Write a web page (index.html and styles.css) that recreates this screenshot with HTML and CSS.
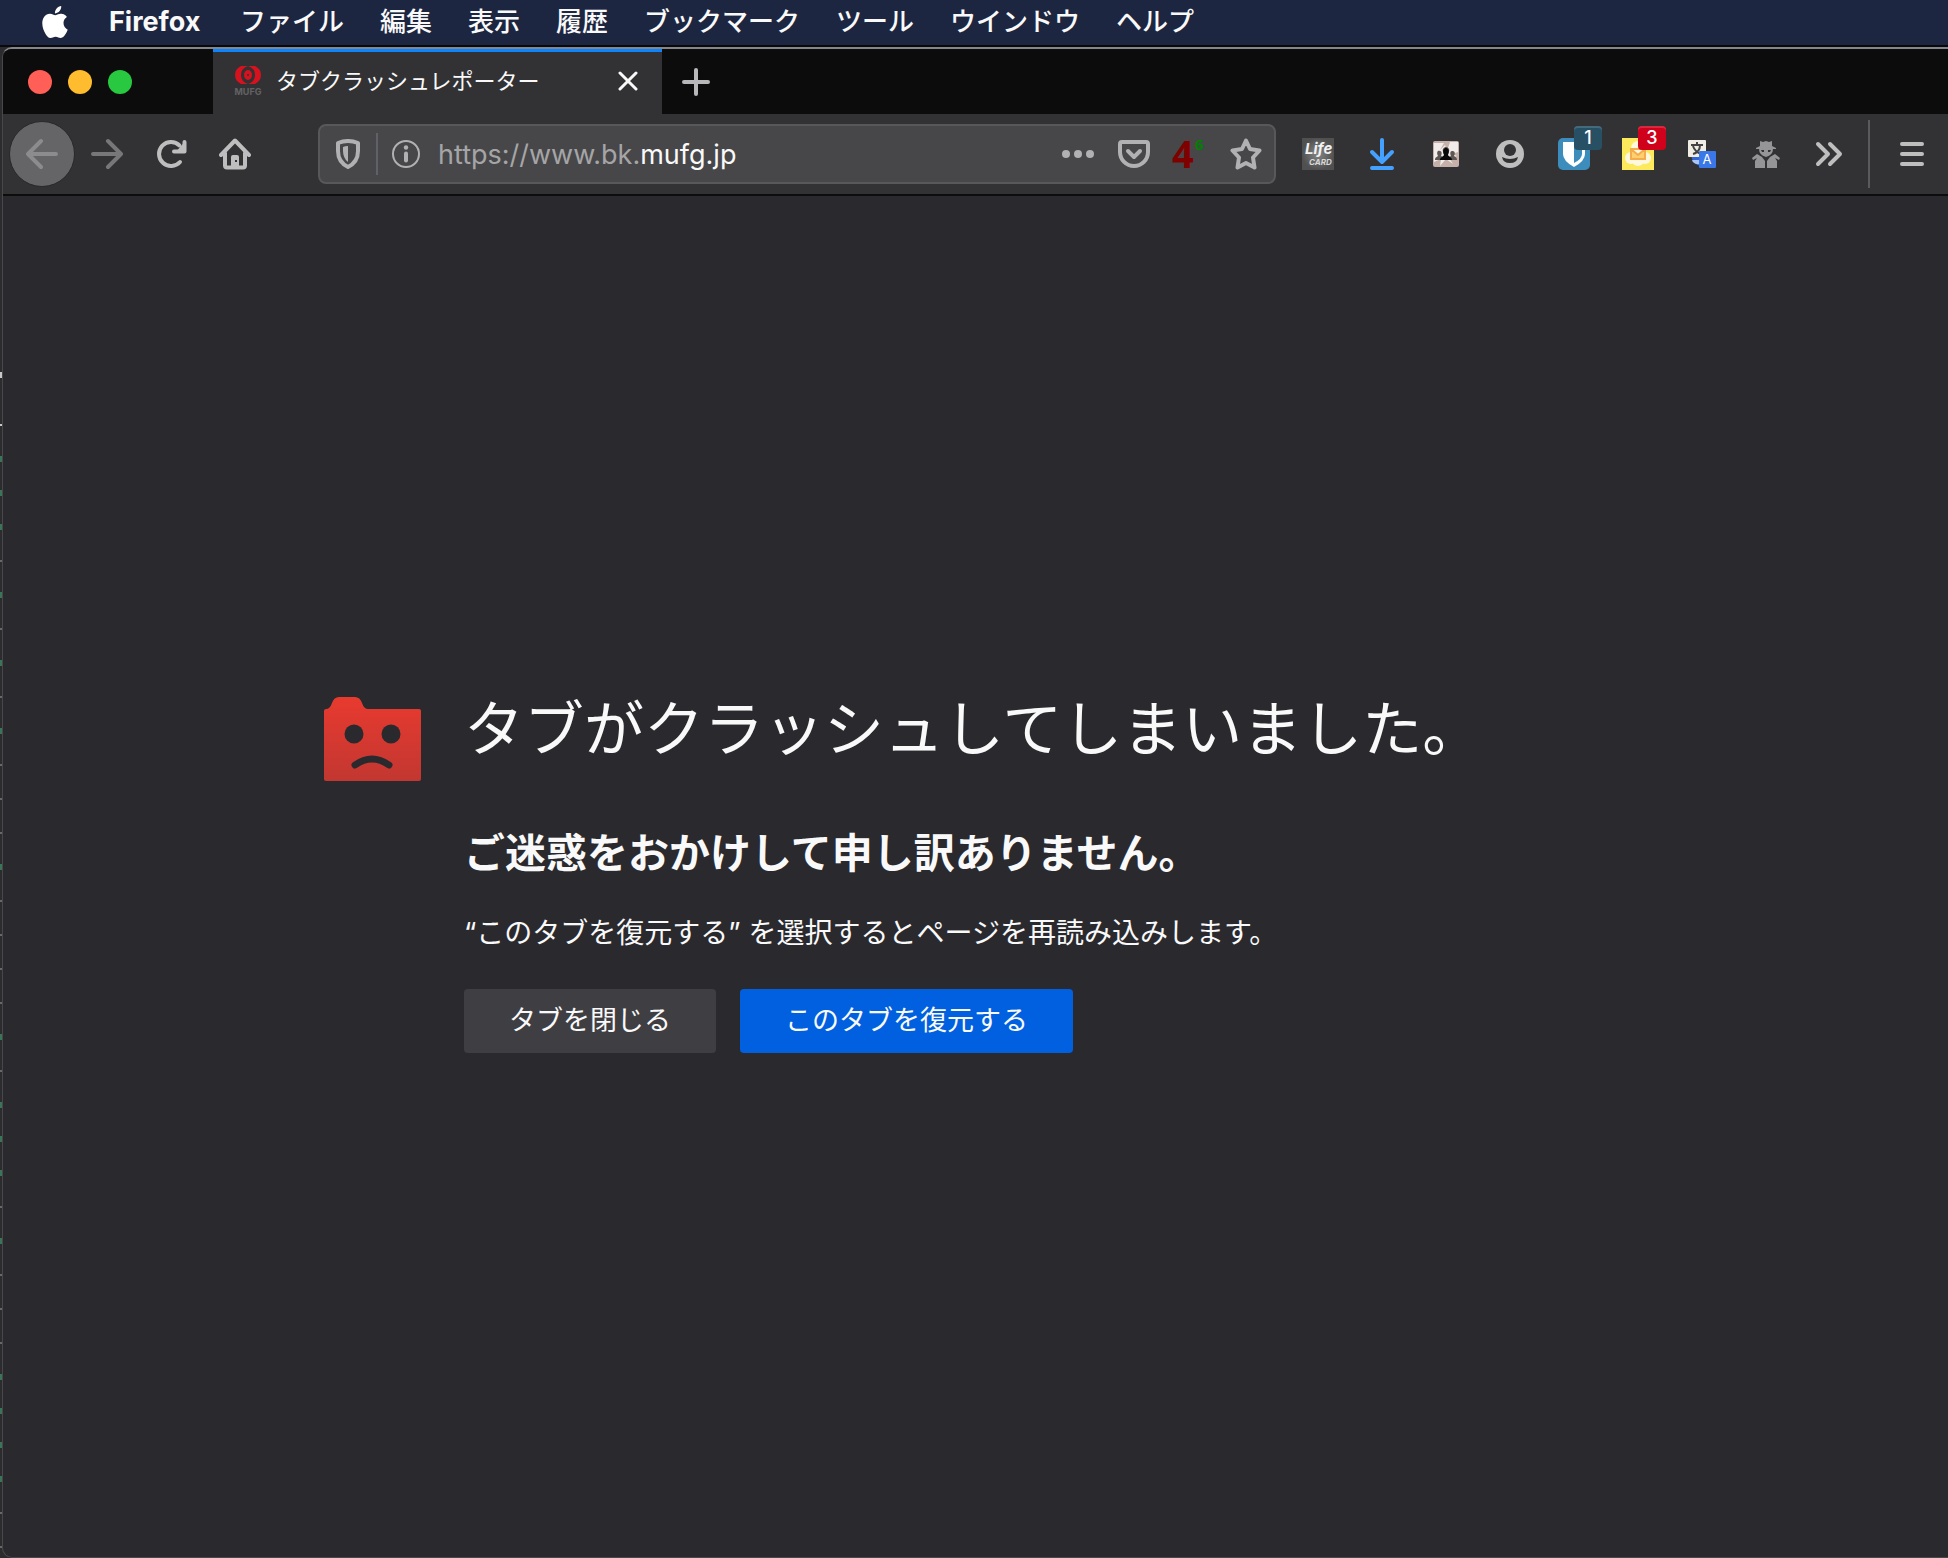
FILE: index.html
```html
<!DOCTYPE html>
<html lang="ja">
<head>
<meta charset="utf-8">
<title>タブクラッシュレポーター</title>
<meta name="viewport" content="width=device-width, initial-scale=1">
<link rel="stylesheet" href="styles.css">
</head>
<body>
<nav class="menubar" aria-label="メニューバー">
  <button class="menu-item apple" aria-label="アップル">
    <svg width="26" height="32" viewBox="2 0 20 24" preserveAspectRatio="none"><path fill="#fff" d="M12.15 6.9c-.95 0-2.42-1.08-3.96-1.04-2.04.03-3.91 1.18-4.96 3.01-2.12 3.68-.55 9.1 1.52 12.09 1.01 1.45 2.21 3.09 3.79 3.04 1.52-.07 2.09-.99 3.94-.99 1.83 0 2.35.99 3.96.95 1.64-.03 2.68-1.48 3.68-2.95 1.16-1.69 1.64-3.33 1.66-3.42-.04-.01-3.18-1.22-3.22-4.86-.03-3.04 2.48-4.49 2.6-4.56-1.43-2.09-3.62-2.32-4.39-2.38-2-.16-3.68 1.09-4.62 1.09zM15.53 3.83c.84-1.01 1.4-2.43 1.25-3.83-1.21.05-2.66.81-3.53 1.82-.78.9-1.45 2.34-1.27 3.71 1.34.1 2.71-.69 3.55-1.7"/></svg>
  </button>
  <button class="menu-item app-name">Firefox</button>
  <button class="menu-item">ファイル</button>
  <button class="menu-item">編集</button>
  <button class="menu-item">表示</button>
  <button class="menu-item">履歴</button>
  <button class="menu-item">ブックマーク</button>
  <button class="menu-item">ツール</button>
  <button class="menu-item">ウインドウ</button>
  <button class="menu-item">ヘルプ</button>
</nav>
<div class="desktop">
  <svg class="behind" width="2" height="1508" aria-hidden="true">
    <g transform="translate(0 3)">
      <path stroke="#68686b" stroke-width="2" stroke-dasharray="2 32" d="M1 408V1508"/>
      <path fill="#3b7558" d="M0 406h2v6H0zM0 440h2v6H0zM0 474h2v6H0zM0 542h2v6H0zM0 610h2v6H0zM0 678h2v6H0zM0 814h2v6H0zM0 984h2v6H0zM0 1052h2v6H0zM0 1086h2v6H0zM0 1120h2v6H0zM0 1188h2v6H0zM0 1324h2v6H0zM0 1358h2v6H0zM0 1392h2v6H0zM0 1426h2v6H0z"/>
      <path fill="#c8c8c8" d="M0 322h2v6H0zM0 374h2v2H0z"/>
    </g>
  </svg>
  <div class="window">
    <header class="tabbar">
      <div class="lights">
        <button class="light close" aria-label="閉じる"></button>
        <button class="light minimize" aria-label="しまう"></button>
        <button class="light zoom" aria-label="拡大"></button>
      </div>
      <div class="tab">
        <svg class="favicon" width="28" height="30" viewBox="0 0 28 30" aria-hidden="true">
          <path fill="#d5121e" d="M7 0h7Q7 2.500 7 9t7 9H7Q1 15 1 9T7 0zM21 0h-7q7 2.500 7 9t-7 9h7q6-3 6-9t-6-9z"/>
          <path fill="#d5121e" fill-rule="evenodd" d="M14 4a4 5 0 0 1 0 10 4 5 0 0 1 0-10zM14 8a1 1 0 0 0 0 2 1 1 0 0 0 0-2z"/>
          <text x="14" y="29" text-anchor="middle" font-size="9" font-weight="700" fill="#626264">MUFG</text>
        </svg>
        <span class="tab-title">タブクラッシュレポーター</span>
        <button class="tab-close" aria-label="タブを閉じる">
          <svg width="20" height="20" viewBox="0 0 20 20"><path d="M2 2l16 16M18 2L2 18" stroke="#f9f9fa" stroke-width="3" stroke-linecap="round"/></svg>
        </button>
      </div>
      <button class="new-tab" aria-label="新しいタブ">
        <svg width="28" height="28" viewBox="0 0 28 28"><path d="M14 2v24M2 14h24" stroke="#b8b8ba" stroke-width="4" stroke-linecap="round"/></svg>
      </button>
    </header>
    <div class="toolbar">
      <div class="nav-buttons">
        <button class="back" aria-label="戻る"><svg width="32" height="32" viewBox="0 0 32 32"><path d="M30 16H2M15 3L2 16l13 13" class="line dim-a"/></svg></button>
        <button class="nav" aria-label="進む"><svg width="32" height="32" viewBox="0 0 32 32"><path d="M2 16h28M17 3l13 13-13 13" class="line dim-b"/></svg></button>
        <button class="nav" aria-label="再読み込み"><svg width="32" height="32" viewBox="0 0 32 32"><path d="M25 24A12 12 0 1 1 24.500 7.500" class="line"/><path d="M19 13.500h10.500V4" class="line"/><path d="M20 15h9.500V4z" fill="#bebebf"/></svg></button>
        <button class="nav" aria-label="ホーム"><svg width="32" height="32" viewBox="0 0 32 32"><path d="M2 17L16 2.500 30 17M6 15v12.500a2 2 0 0 0 2 2h16a2 2 0 0 0 2-2V15" class="line"/><path d="M12 29V19a2 2 0 0 1 2-2h4a2 2 0 0 1 2 2v10z" fill="#bebebf"/><path d="M16 22h2v2h-2z" fill="#323234"/></svg></button>
      </div>
      <div class="urlbar">
        <button class="url-icon shield" aria-label="トラッキング防止"><svg width="26" height="30" viewBox="0 0 26 30"><path d="M3 4q10-4 20 0v8q0 11-10 16Q3 23 3 12z" fill="none" stroke="#b1b1b3" stroke-width="4" stroke-linejoin="round"/><path d="M13 7v16Q8 19 8 12V8q2-1 5-1z" fill="#b1b1b3"/></svg></button>
        <button class="url-icon info" aria-label="サイト情報"><svg width="30" height="30" viewBox="0 0 30 30"><circle cx="15" cy="15" r="13" fill="none" stroke="#b1b1b3" stroke-width="2"/><path d="M15 14.500v7" stroke="#b1b1b3" stroke-width="4" stroke-linecap="round"/><circle cx="15" cy="8.500" r="2.200" fill="#b1b1b3"/></svg></button>
        <a class="url" href="https://www.bk.mufg.jp">https://www.bk.<span class="domain">mufg.jp</span></a>
        <div class="url-actions">
          <button class="url-icon" aria-label="ページ操作"><svg width="32" height="32" viewBox="0 0 32 32" fill="#b1b1b3"><circle cx="4" cy="16" r="4"/><circle cx="16" cy="16" r="4"/><circle cx="28" cy="16" r="4"/></svg></button>
          <button class="url-icon" aria-label="Pocket"><svg width="32" height="32" viewBox="0 0 32 32"><path d="M4 4h24q2 0 2 2v8a14 14 0 0 1-28 0V6q0-2 2-2z" class="line url-line"/><path d="M10 13l6 6 6-6" class="line url-line"/></svg></button>
          <button class="url-icon" aria-label="IPv4"><svg class="ip" width="32" height="32" viewBox="0 0 32 32"><text x="-2" y="30" font-size="38" fill="#800000">4</text><text x="21" y="12" font-size="15" fill="#008000">6</text></svg></button>
          <button class="url-icon" aria-label="ブックマークに追加"><svg width="32" height="32" viewBox="0 0 32 32"><path d="M16 2.500l4 8.500 9.500 1.500-6.500 7 1.500 10L16 25l-8.500 4.500L9 19.500l-6.500-7L12 11z" class="line url-line"/></svg></button>
        </div>
      </div>
      <div class="extensions">
        <button class="ext" aria-label="Life Card"><svg width="32" height="32" viewBox="0 0 32 32"><defs><radialGradient id="lc"><stop offset="0" stop-color="#858585"/><stop offset="1" stop-color="#505050"/></radialGradient></defs><path fill="url(#lc)" d="M0 0h32v32H0z"/><text x="3" y="16" font-size="15" font-style="italic" font-weight="700" fill="#f2f2f2">Life</text><text x="7" y="27" font-size="8" font-style="italic" font-weight="700" fill="#d8d8d8">CARD</text></svg></button>
        <button class="ext" aria-label="ダウンロード"><svg width="32" height="32" viewBox="0 0 32 32"><path d="M16 2v22M6 14l10 10 10-10M6 30h20" fill="none" stroke="#45a1ff" stroke-width="4" stroke-linecap="round" stroke-linejoin="round"/></svg></button>
        <button class="ext" aria-label="グループ"><svg width="32" height="32" viewBox="0 0 32 32"><rect x="3" y="3" width="26" height="26" rx="2" fill="#c5b1a9"/><path d="M4 5h10l-4 7 5-5 2 6 3-9h8v10l-6 2 5 2-8 2 4 6-7-5-6 7 1-7-7 3z" fill="#f1ece9"/><path d="M5 22c0-3 2-3 3-4-2-4 0-6 2-5 2 0 2 3 1 5l2 1c1-1 1-1 1-3-3-5 0-7 2-7s5 2 2 7c0 2 0 2 1 3l2-1c-1-2-1-5 1-5s4 1 2 5c1 1 3 1 3 4z" fill="#5d5653"/><path d="M10 22c0-3 3-3 4-5-2-5 0-7 2-7s4 2 2 7c1 2 4 2 4 5z" fill="#090909"/></svg></button>
        <button class="ext" aria-label="アカウント"><svg width="32" height="32" viewBox="0 0 32 32"><circle cx="16" cy="16" r="14" fill="#bebebf"/><circle cx="16" cy="12" r="6" fill="#323234"/><path d="M8 19q8 4 16 0-1 6-8 6t-8-6z" fill="#323234"/></svg></button>
        <button class="ext" aria-label="Bitwarden"><svg width="32" height="32" viewBox="0 0 32 32"><rect width="32" height="32" rx="5" fill="#3c8dbc"/><path d="M5 4h22v12q0 7-11 13Q5 23 5 16z" fill="#fff"/><path d="M16 7h8v9q0 5-8 9z" fill="#3c8dbc"/></svg><span class="badge teal">1</span></button>
        <button class="ext" aria-label="メール通知"><svg width="32" height="32" viewBox="0 0 32 32"><path fill="#fde95c" d="M0 0h32v32H0z"/><g fill="#fff8df"><circle cx="16" cy="10" r="7"/><circle cx="9" cy="20" r="6"/><circle cx="23" cy="20" r="6"/><circle cx="16" cy="22" r="6"/></g><path d="M9 11h14v10H9zM9 11l7 6 7-6" fill="#fdd070" stroke="#f5ac4c" stroke-width="2"/></svg><span class="badge red">3</span></button>
        <button class="ext" aria-label="翻訳"><svg width="32" height="32" viewBox="0 0 32 32"><path d="M5 17h10v11q-9-2-10-11z" fill="#3367d6"/><path d="M6 22h9v4q-8 1-9-4z" fill="#a9c4f7"/><rect x="2" y="2" width="18" height="17" rx="1" fill="#f0eee4"/><path d="M11 4v3M5 7h12M7 16q7-2 7-9M7 8q2 6 8 8" stroke="#444" stroke-width="2" fill="none"/><rect x="13" y="13" width="17" height="17" rx="1" fill="#3a77e8"/><text x="21" y="26" text-anchor="middle" font-size="13" fill="#fff">A</text></svg></button>
        <button class="ext" aria-label="プライバシー"><svg width="32" height="32" viewBox="0 0 32 32" fill="#959597"><path d="M10 3l3 1 3-1 3 1 3-1v5l4 2v1H6v-1l4-2zM9 11h14q0 6-7 8-7-2-7-8zM7 16l5 3 3 4v7H5v-7l2-3-4 2-1-2zM25 16l-5 3-3 4v7h10v-7l-2-3 4 2 1-2z"/><path d="M11 12h3v2h-2zM18 12h3l-1 2h-2z" fill="#323234"/></svg></button>
        <button class="ext" aria-label="その他のツール"><svg width="32" height="32" viewBox="0 0 32 32"><path d="M4 6l10 10L4 26M16 6l10 10-10 10" class="line"/></svg></button>
      </div>
      <button class="app-menu" aria-label="メニュー"><svg width="24" height="24" viewBox="0 0 24 24"><path d="M2 2h20M2 12h20M2 22h20" class="line"/></svg></button>
    </div>
    <main class="content">
      <section class="crash">
        <svg class="crash-icon" width="97" height="84" viewBox="0 0 97 84" aria-hidden="true">
          <defs><linearGradient id="red" x1="0" y1="0" x2="0" y2="1"><stop offset="0" stop-color="#e83a2f"/><stop offset="1" stop-color="#c23731"/></linearGradient></defs>
          <path fill="url(#red)" d="M2 12q4 0 6-6 2-6 7-6h16q5 0 7 6 2 6 6 6h51q2 0 2 2v68q0 2-2 2H2q-2 0-2-2V14q0-2 2-2z"/>
          <circle cx="30" cy="37" r="9.500" fill="#2a2a2e"/><circle cx="67" cy="37" r="9.500" fill="#2a2a2e"/>
          <path d="M31 68q17-12 34 0" fill="none" stroke="#2a2a2e" stroke-width="7" stroke-linecap="round"/>
        </svg>
        <div class="crash-body">
          <h1>タブがクラッシュしてしまいました。</h1>
          <h2>ご迷惑をおかけして申し訳ありません。</h2>
          <p>“このタブを復元する” を選択するとページを再読み込みします。</p>
          <div class="actions">
            <button class="btn">タブを閉じる</button>
            <button class="btn primary">このタブを復元する</button>
          </div>
        </div>
      </section>
    </main>
  </div>
</div>
</body>
</html>
```
FILE: styles.css
```css
* { box-sizing: border-box; }

body {
  margin: 0;
  min-height: 100vh;
  display: flex;
  flex-direction: column;
  background: #2c2c2e;
  color: #f9f9fa;
  font-family: Inter, "Noto Sans CJK JP", sans-serif;
}

button {
  margin: 0;
  padding: 0;
  border: 0;
  background: none;
  color: inherit;
  font: inherit;
  cursor: default;
}

svg { display: block; flex: none; }

/* System menu bar */
.menubar {
  display: flex;
  align-items: center;
  height: 47px;
  padding: 0 42px 2px;
  gap: 36px;
  background: #1d2640;
  border-bottom: 2px solid #08090d;
  font-size: 26px;
  line-height: 40px;
  font-weight: 500;
  white-space: nowrap;
}

.app-name { min-width: 95px; font-weight: 700; font-size: 27px; text-align: left; }
.apple { width: 31px; }

/* Browser window, with a sliver of the window behind on its left */
.desktop { flex: 1; display: flex; align-items: stretch; background: #2c2c2e; }
.behind { width: 2px; }

.window {
  flex: 1;
  min-width: 0;
  display: flex;
  flex-direction: column;
  overflow: hidden;
  border-top: 2px solid #85858a;
  border-left: 1px solid #48484a;
  border-bottom: 1px solid #48484a;
  border-radius: 10px 0 0 10px;
  background: #2a2a2e;
}

.tabbar { display: flex; height: 65px; background: #0c0c0d; }

.lights { display: flex; align-items: center; gap: 16px; width: 210px; padding-left: 25px; }
.light { width: 24px; height: 24px; border-radius: 50%; }
.light.close { background: #ff5f57; }
.light.minimize { background: #febc2e; }
.light.zoom { background: #28c840; }

.tab {
  display: flex;
  align-items: center;
  width: 449px;
  padding: 0 24px 2px 21px;
  background: #323234;
  box-shadow: inset 0 3px #0a84ff;
}
.tab-title { flex: 1; padding-left: 14px; font-size: 22px; line-height: 32px; white-space: nowrap; }
.new-tab { padding: 0 20px; }

/* Navigation toolbar */
.toolbar {
  display: flex;
  align-items: center;
  height: 82px;
  padding-left: 6px;
  background: #323234;
  border-bottom: 2px solid #0c0c0d;
}

.line { fill: none; stroke: #bebebf; stroke-width: 4; stroke-linecap: round; stroke-linejoin: round; }
.url-line { stroke: #b1b1b3; }
.dim-a { stroke: #8c8c8e; }
.dim-b { stroke: #77777a; }

.nav-buttons { display: flex; align-items: center; width: 309px; }
.back {
  display: grid;
  place-items: center;
  width: 66px;
  height: 66px;
  border: 1px solid #28282a;
  border-radius: 50%;
  background: #656567;
}
.nav { display: grid; place-items: center; width: 64px; height: 64px; }

.urlbar {
  flex: 1;
  display: flex;
  align-items: center;
  height: 60px;
  min-width: 0;
  border: 2px solid #58585a;
  border-radius: 8px;
  background: #474749;
}
.url-icon { display: grid; place-items: center; width: 56px; height: 42px; }
.shield { width: 58px; border-right: 2px solid #5f6068; }
.url { flex: 1; padding: 2px 0 0 4px; color: #a5a5a7; font-size: 27px; line-height: 36px; text-decoration: none; white-space: nowrap; }
.domain { color: #f9f9fa; }
.url-actions { display: flex; }
.ip { overflow: visible; font-family: "Open Sans", sans-serif; font-weight: 700; }

.extensions { display: flex; padding: 0 6px 0 10px; }
.ext { position: relative; display: grid; place-items: center; width: 64px; height: 64px; }
.badge {
  position: absolute;
  top: 4px;
  right: 4px;
  width: 28px;
  height: 24px;
  border-radius: 4px;
  color: #fff;
  font-size: 18px;
  font-weight: 500;
  line-height: 24px;
}
.teal { background: #285064; box-shadow: inset 0 2px #456a7b; }
.red { background: #d0021b; box-shadow: inset 0 2px #d72a3f; }

.app-menu {
  display: grid;
  place-items: center;
  width: 80px;
  height: 68px;
  padding-left: 6px;
  border-left: 2px solid #5a5a5c;
}

/* Crash report */
.content {
  flex: 1;
  display: flex;
  align-items: center;
  padding: 0 321px 12px;
}
.crash { display: flex; align-items: flex-start; gap: 43px; }
.crash-icon { margin-top: 8px; }
h1, h2, p { margin: 0; white-space: nowrap; }
h1 { font-size: 60px; line-height: 80px; font-weight: 400; }
h2 { margin-top: 56px; font-size: 41px; line-height: 56px; font-weight: 700; }
p { margin-top: 32px; font-size: 28px; line-height: 40px; }
.actions { display: flex; gap: 24px; margin-top: 36px; }
.btn {
  height: 64px;
  padding: 0 45px;
  border-radius: 4px;
  background: #3f3f43;
  font-size: 27px;
  line-height: 40px;
  white-space: nowrap;
}
.primary { background: #0060df; }
```
